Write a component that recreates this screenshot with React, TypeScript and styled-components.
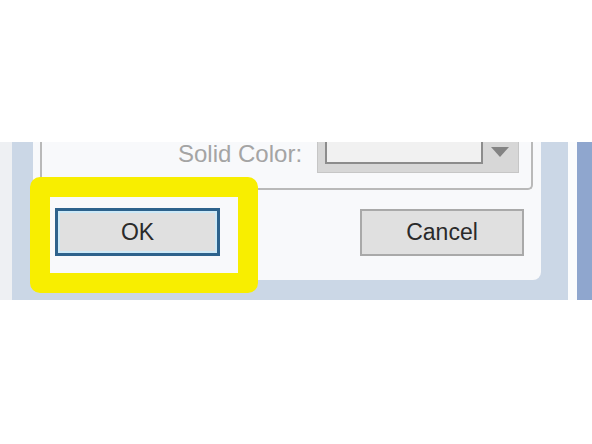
import React from "react";
import styled, { createGlobalStyle } from "styled-components";

const GlobalStyle = createGlobalStyle`
  html, body {
    margin: 0;
    padding: 0;
    background: #ffffff;
  }
  body {
    font-family: "Liberation Sans", Arial, sans-serif;
  }
`;

const Page = styled.div`
  width: 592px;
  height: 444px;
  padding-top: 142px;
  box-sizing: border-box;
  overflow: hidden;
`;

const Window = styled.div`
  position: relative;
  display: flex;
  height: 158px;
`;

const LeftEdge = styled.div`
  width: 12px;
  background: #eef0f3;
`;

const Frame = styled.div`
  flex: 1;
  display: flex;
  padding: 0 27px 20px 21px;
  background: #cbd7e6;
`;

const Gap = styled.div`
  width: 9px;
  background: #fbfcfd;
`;

const OuterEdge = styled.div`
  width: 15px;
  background: #8fa6ce;
`;

const Panel = styled.div`
  flex: 1;
  display: flex;
  flex-direction: column;
  padding: 0 8px 0 7px;
  background: #f8f9fb;
  border-radius: 0 0 8px 8px;
`;

const GroupBox = styled.div`
  display: flex;
  align-items: flex-start;
  height: 48px;
  box-sizing: border-box;
  padding-left: 136px;
  border: 2px solid #b9b9b9;
  border-top: none;
  border-radius: 0 0 5px 5px;
`;

const Label = styled.span`
  font-size: 24px;
  line-height: 24px;
  color: #a4a4a4;
  margin-right: 15px;
  white-space: nowrap;
`;

const Combo = styled.div`
  display: flex;
  width: 202px;
  height: 31px;
  box-sizing: border-box;
  padding: 0 1px 8px 7px;
  background: #d7d7d7;
  border: 1px solid #c6c6c6;
  border-top: none;
`;

const Field = styled.div`
  flex: 1;
  background: #f1f1f1;
  border: 2px solid #8c8c8c;
  border-top: none;
`;

const ArrowBox = styled.div`
  width: 34px;
  display: flex;
  justify-content: center;
  padding-top: 5px;
`;

const Triangle = styled.div`
  width: 0;
  height: 0;
  border-left: 9px solid transparent;
  border-right: 9px solid transparent;
  border-top: 10px solid #838383;
`;

const ButtonRow = styled.div`
  display: flex;
  align-items: center;
  justify-content: space-between;
  margin-top: 18px;
  padding: 0 9px 0 15px;
`;

const Button = styled.button<{ $primary?: boolean }>`
  width: ${(p) => (p.$primary ? "165px" : "164px")};
  height: ${(p) => (p.$primary ? "48px" : "47px")};
  box-sizing: border-box;
  margin: 0;
  padding: 0;
  font-family: "Liberation Sans", Arial, sans-serif;
  font-size: 23px;
  color: #2a2a2a;
  background: #e0e0e0;
  border: ${(p) => (p.$primary ? "3px solid #2d628c" : "2px solid #a9a9a9")};
  box-shadow: ${(p) => (p.$primary ? "inset 0 0 0 2px #cde9f7" : "none")};
`;

const Highlight = styled.div`
  position: absolute;
  left: 30px;
  top: 35px;
  width: 228px;
  height: 116px;
  box-sizing: border-box;
  border: 20px solid #f8ee00;
  border-radius: 10px;
  pointer-events: none;
`;

export default function App() {
  return (
    <>
      <GlobalStyle />
      <Page>
        <Window>
          <LeftEdge />
          <Frame>
            <Panel>
              <GroupBox>
                <Label>Solid Color:</Label>
                <Combo>
                  <Field />
                  <ArrowBox>
                    <Triangle />
                  </ArrowBox>
                </Combo>
              </GroupBox>
              <ButtonRow>
                <Button $primary>OK</Button>
                <Button>Cancel</Button>
              </ButtonRow>
            </Panel>
          </Frame>
          <Gap />
          <OuterEdge />
          <Highlight />
        </Window>
      </Page>
    </>
  );
}
